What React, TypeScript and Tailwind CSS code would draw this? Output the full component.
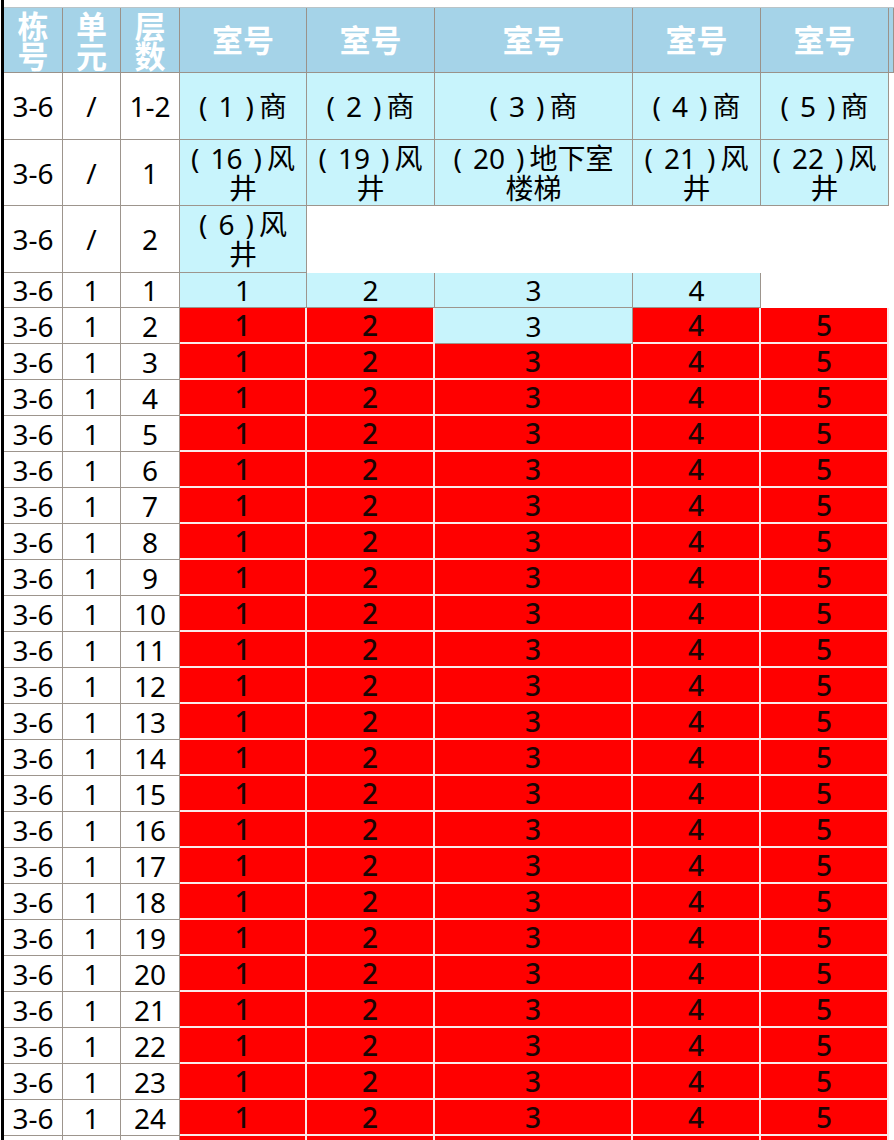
import type { ReactNode } from "react";

type Kind = "h" | "w" | "c" | "r" | "e";
type Cell = [Kind, ReactNode];

const cellClass: Record<Kind, string> = {
  h: "bg-[#a5d3e8] border-r border-b border-[#9a928a] text-white font-bold",
  w: "bg-white border-r border-b border-[#9d958d] text-black",
  c: "bg-[#c8f4fc] border-r border-b border-[#9d958d] text-black",
  r: "bg-[#ff0000] border-r-2 border-b-2 border-[#fbe9e9] text-[#1a0505] font-medium",
  e: "bg-white",
};

// "(n)text" with the loose spacing of the sheet; `second` goes on its own line
function Room({ n, text, second }: { n: string; text: string; second?: string }) {
  return (
    <div className="flex flex-col items-center">
      <div className="whitespace-nowrap">
        <span>(</span>
        <span className="mx-[11px]">{n}</span>
        <span className="mr-[5px]">)</span>
        {text}
      </div>
      {second && <div>{second}</div>}
    </div>
  );
}

const left = (a: string, b: string, c: string): Cell[] => [
  ["w", a],
  ["w", b],
  ["w", c],
];

const rows: { h: string; cells: Cell[] }[] = [
  {
    h: "h-[67px]",
    cells: [
      ...left("3-6", "/", "1-2"),
      ["c", <Room n="1" text="商" />],
      ["c", <Room n="2" text="商" />],
      ["c", <Room n="3" text="商" />],
      ["c", <Room n="4" text="商" />],
      ["c", <Room n="5" text="商" />],
      ["e", ""],
    ],
  },
  {
    h: "h-[66px]",
    cells: [
      ...left("3-6", "/", "1"),
      ["c", <Room n="16" text="风" second="井" />],
      ["c", <Room n="19" text="风" second="井" />],
      ["c", <Room n="20" text="地下室" second="楼梯" />],
      ["c", <Room n="21" text="风" second="井" />],
      ["c", <Room n="22" text="风" second="井" />],
      ["e", ""],
    ],
  },
  {
    h: "h-[67px]",
    cells: [
      ...left("3-6", "/", "2"),
      ["c", <Room n="6" text="风" second="井" />],
      ["e", ""],
      ["e", ""],
      ["e", ""],
      ["e", ""],
      ["e", ""],
    ],
  },
  {
    h: "h-[35px]",
    cells: [
      ...left("3-6", "1", "1"),
      ["c", "1"],
      ["c", "2"],
      ["c", "3"],
      ["c", "4"],
      ["e", ""],
      ["e", ""],
    ],
  },
  {
    h: "h-[36px]",
    cells: [
      ...left("3-6", "1", "2"),
      ["r", "1"],
      ["r", "2"],
      ["c", "3"],
      ["r", "4"],
      ["r", "5"],
      ["e", ""],
    ],
  },
];

for (let f = 3; f <= 25; f++) {
  rows.push({
    h: "h-[36px]",
    cells: [
      ...left("3-6", "1", String(f)),
      ["r", "1"],
      ["r", "2"],
      ["r", "3"],
      ["r", "4"],
      ["r", "5"],
      ["e", ""],
    ],
  });
}

function HeaderStack({ text }: { text: string }) {
  return (
    <div className="h-[65px] bg-[#a5d3e8] border-r border-b border-[#9a928a] overflow-hidden flex flex-col items-center pt-[3px] text-white font-bold text-[31px] leading-[30px]">
      {text.split("").map((ch) => (
        <span key={ch}>{ch}</span>
      ))}
    </div>
  );
}

export default function App() {
  return (
    <div
      className="w-[894px] h-[1140px] overflow-hidden bg-white"
      style={{ fontFamily: '"Noto Sans", "Noto Sans CJK SC", sans-serif' }}
    >
      <div className="ml-px border-l-[3px] border-black pt-[7px]">
        <div className="grid grid-cols-[59px_58px_59px_127px_128px_198px_128px_128px_1fr] border-t border-[#b9c4c8]">
          {/* header */}
          <HeaderStack text="栋号" />
          <HeaderStack text="单元" />
          <HeaderStack text="层数" />
          {[0, 1, 2, 3, 4].map((i) => (
            <div
              key={i}
              className={`h-[65px] flex items-center justify-center text-[31px] ${cellClass.h}`}
            >
              室号
            </div>
          ))}
          <div className={`h-[65px] ${cellClass.h}`} />

          {rows.map((row, ri) =>
            row.cells.map(([kind, content], ci) => (
              <div
                key={`${ri}-${ci}`}
                className={`${row.h} flex items-center justify-center text-center text-[28px] leading-[30px] overflow-hidden ${cellClass[kind]}`}
              >
                {content}
              </div>
            ))
          )}
        </div>
      </div>
    </div>
  );
}
